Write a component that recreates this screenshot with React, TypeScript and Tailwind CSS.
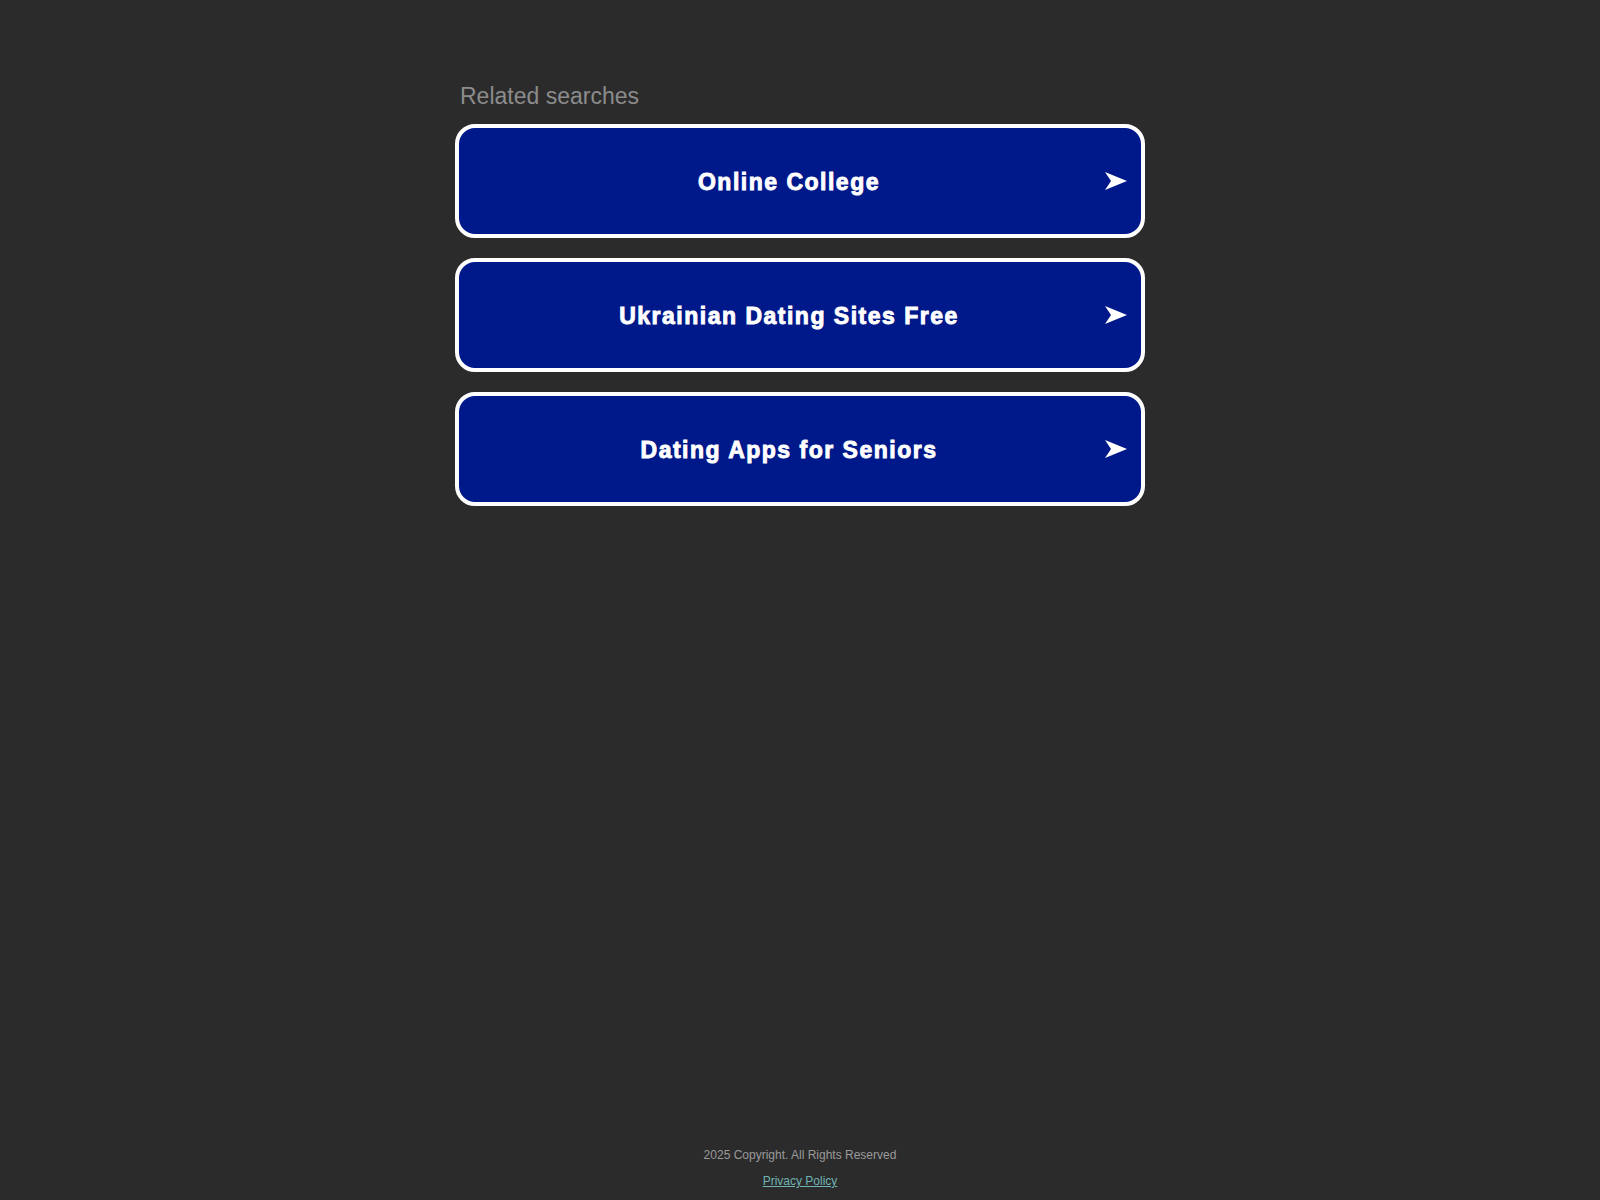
import React from 'react';

const searches = ['Online College', 'Ukrainian Dating Sites Free', 'Dating Apps for Seniors'];

function Arrow() {
  return (
    <svg width="22" height="18" viewBox="0 0 22 18" className="shrink-0">
      <path d="M0 0 L22 9 L0 18 L6 9 Z" fill="#ffffff" />
    </svg>
  );
}

export default function App() {
  return (
    <div className="min-h-screen bg-[#2b2b2b] flex flex-col font-['Liberation_Sans',Arial,sans-serif]">
      <main className="flex-1 flex justify-center pt-[82px]">
        <div className="w-[690px]">
          <h2 className="text-[23px] leading-[28px] text-[#8c8c8c] pl-[5px] mb-[14px]">Related searches</h2>
          <div className="flex flex-col gap-[20px]">
            {searches.map((s) => (
              <a
                key={s}
                href="#"
                className="h-[114px] flex items-center border-[4px] border-white rounded-[20px] bg-[#00198a] pl-[14px] pr-[14px]"
              >
                <span className="flex-1 text-center text-white font-bold text-[23px] pt-[3px] tracking-[1.5px] [-webkit-text-stroke:0.9px_#fff]">
                  {s}
                </span>
                <Arrow />
              </a>
            ))}
          </div>
        </div>
      </main>
      <footer className="flex flex-col items-center pb-[12px] text-[12px]">
        <p className="text-[#9a9a9a] leading-[14px]">2025 Copyright. All Rights Reserved</p>
        <a href="#" className="mt-[12px] text-[#6fb3b3] underline leading-[14px]">Privacy Policy</a>
      </footer>
    </div>
  );
}
